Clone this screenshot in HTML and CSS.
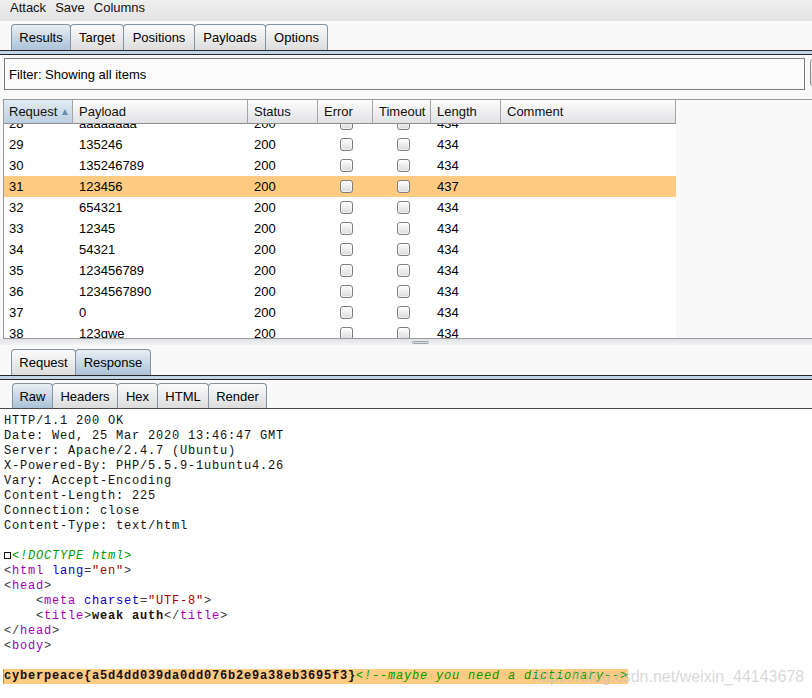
FILE: index.html
```html
<!DOCTYPE html>
<html lang="en">
<head>
<meta charset="UTF-8">
<title>Intruder attack</title>
<link rel="stylesheet" href="styles.css">
</head>
<body>
<div class="app">
  <div class="menubar"><span>Attack</span><span>Save</span><span>Columns</span></div>

  <div class="tabstrip top-tabs">
    <div class="tab sel tw-results">Results</div>
    <div class="tab tw-target">Target</div>
    <div class="tab tw-positions">Positions</div>
    <div class="tab tw-payloads">Payloads</div>
    <div class="tab tw-options">Options</div>
  </div>
  <div class="rule"></div>

  <div class="filter-row">
    <div class="filter">Filter: Showing all items</div>
    <div class="filter-btn"></div>
  </div>

  <div class="results">
    <div class="table">
      <div class="thead">
        <div class="th sorted">Request<span class="sort-arrow"></span></div>
        <div class="th">Payload</div>
        <div class="th">Status</div>
        <div class="th">Error</div>
        <div class="th">Timeout</div>
        <div class="th">Length</div>
        <div class="th">Comment</div>
      </div>
      <div class="tbody">
        <div class="rows">
          <div class="tr"><div class="td first">28</div><div class="td">aaaaaaaa</div><div class="td">200</div><div class="td cb"><span class="box"></span></div><div class="td cb"><span class="box"></span></div><div class="td">434</div><div class="td"></div></div>
          <div class="tr"><div class="td first">29</div><div class="td">135246</div><div class="td">200</div><div class="td cb"><span class="box"></span></div><div class="td cb"><span class="box"></span></div><div class="td">434</div><div class="td"></div></div>
          <div class="tr"><div class="td first">30</div><div class="td">135246789</div><div class="td">200</div><div class="td cb"><span class="box"></span></div><div class="td cb"><span class="box"></span></div><div class="td">434</div><div class="td"></div></div>
          <div class="tr hl"><div class="td first">31</div><div class="td">123456</div><div class="td">200</div><div class="td cb"><span class="box"></span></div><div class="td cb"><span class="box"></span></div><div class="td">437</div><div class="td"></div></div>
          <div class="tr"><div class="td first">32</div><div class="td">654321</div><div class="td">200</div><div class="td cb"><span class="box"></span></div><div class="td cb"><span class="box"></span></div><div class="td">434</div><div class="td"></div></div>
          <div class="tr"><div class="td first">33</div><div class="td">12345</div><div class="td">200</div><div class="td cb"><span class="box"></span></div><div class="td cb"><span class="box"></span></div><div class="td">434</div><div class="td"></div></div>
          <div class="tr"><div class="td first">34</div><div class="td">54321</div><div class="td">200</div><div class="td cb"><span class="box"></span></div><div class="td cb"><span class="box"></span></div><div class="td">434</div><div class="td"></div></div>
          <div class="tr"><div class="td first">35</div><div class="td">123456789</div><div class="td">200</div><div class="td cb"><span class="box"></span></div><div class="td cb"><span class="box"></span></div><div class="td">434</div><div class="td"></div></div>
          <div class="tr"><div class="td first">36</div><div class="td">1234567890</div><div class="td">200</div><div class="td cb"><span class="box"></span></div><div class="td cb"><span class="box"></span></div><div class="td">434</div><div class="td"></div></div>
          <div class="tr"><div class="td first">37</div><div class="td">0</div><div class="td">200</div><div class="td cb"><span class="box"></span></div><div class="td cb"><span class="box"></span></div><div class="td">434</div><div class="td"></div></div>
          <div class="tr"><div class="td first">38</div><div class="td">123qwe</div><div class="td">200</div><div class="td cb"><span class="box"></span></div><div class="td cb"><span class="box"></span></div><div class="td">434</div><div class="td"></div></div>
        </div>
      </div>
    </div>
    <div class="side"></div>
  </div>

  <div class="divider"><div class="handle"></div></div>

  <div class="tabstrip mid-tabs">
    <div class="tab tw-request">Request</div>
    <div class="tab sel tw-response">Response</div>
  </div>
  <div class="rule"></div>

  <div class="tabstrip sub-tabs">
    <div class="tab sel tw-raw">Raw</div>
    <div class="tab tw-headers">Headers</div>
    <div class="tab tw-hex">Hex</div>
    <div class="tab tw-html">HTML</div>
    <div class="tab tw-render">Render</div>
  </div>

  <div class="code">
<pre>HTTP/1.1 200 OK
Date: Wed, 25 Mar 2020 13:46:47 GMT
Server: Apache/2.4.7 (Ubuntu)
X-Powered-By: PHP/5.5.9-1ubuntu4.26
Vary: Accept-Encoding
Content-Length: 225
Connection: close
Content-Type: text/html

<span class="bom"></span><span class="cm">&lt;!DOCTYPE html&gt;</span>
<span class="p">&lt;</span><span class="tg">html</span> <span class="at">lang</span><span class="p">=</span><span class="av">"en"</span><span class="p">&gt;</span>
<span class="p">&lt;</span><span class="tg">head</span><span class="p">&gt;</span>
    <span class="p">&lt;</span><span class="tg">meta</span> <span class="at">charset</span><span class="p">=</span><span class="av">"UTF-8"</span><span class="p">&gt;</span>
    <span class="p">&lt;</span><span class="tg">title</span><span class="p">&gt;</span><span class="b">weak auth</span><span class="p">&lt;/</span><span class="tg">title</span><span class="p">&gt;</span>
<span class="p">&lt;/</span><span class="tg">head</span><span class="p">&gt;</span>
<span class="p">&lt;</span><span class="tg">body</span><span class="p">&gt;</span>

<span class="flag"><span class="b">cyberpeace{a5d4dd039da0dd076b2e9a38eb3695f3}</span><span class="cm">&lt;!--maybe you need a dictionary--&gt;</span></span></pre>
  </div>

  <div class="watermark">https://blog.csdn.net/weixin_44143678</div>
</div>
</body>
</html>
```

FILE: styles.css
```css
html, body {
  margin: 0;
  padding: 0;
}
body {
  background: #f8f8f8;
  font-family: "Liberation Sans", Arial, sans-serif;
  font-size: 13px;
  color: #000;
}
.app {
  width: 812px;
  height: 698px;
  overflow: hidden;
  position: relative;
  background: #f9f9f9;
}

/* menu */
.menubar {
  height: 21px;
  box-sizing: border-box;
  display: flex;
  align-items: flex-start;
  gap: 9px;
  padding-left: 10px;
  line-height: 15px;
  color: #111;
  background: linear-gradient(#efefef, #e3e3e3);
}

/* tabs */
.tabstrip {
  display: flex;
  align-items: flex-end;
  box-sizing: border-box;
  height: 29px;
  padding-top: 3px;
  padding-left: 11px;
}
.tab {
  height: 26px;
  box-sizing: border-box;
  border: 1px solid #8592a0;
  border-bottom: none;
  border-radius: 4px 4px 0 0;
  margin-right: -1px;
  display: flex;
  align-items: center;
  justify-content: center;
  background: linear-gradient(#fbfbfb, #dcdcdc);
  line-height: 1;
  flex-shrink: 0;
}
.tab.sel {
  background: linear-gradient(#e8eef4, #aac2d8);
  position: relative;
  z-index: 1;
}
.tw-results { width: 60px; }
.tw-target { width: 54px; }
.tw-positions { width: 72px; }
.tw-payloads { width: 72px; }
.tw-options { width: 63px; }
.tw-request { width: 65px; }
.tw-response { width: 76px; }
.tw-raw { width: 41px; }
.tw-headers { width: 66px; }
.tw-hex { width: 41px; }
.tw-html { width: 52px; }
.tw-render { width: 59px; }

.sub-tabs {
  padding-left: 12px;
  border-bottom: 1px solid #4a4a4a;
}
.sub-tabs .tab {
  height: 25px;
}
.mid-tabs {
  padding-top: 4px;
  height: 30px;
}

.rule {
  height: 5px;
  box-sizing: border-box;
  border-top: 1px solid #262626;
  border-bottom: 1px solid #262626;
  background: #c3d6e8;
}

/* filter */
.filter-row {
  display: flex;
  gap: 5px;
  margin-top: 3px;
  margin-left: 4px;
  height: 32px;
}
.filter {
  width: 801px;
  height: 32px;
  flex-shrink: 0;
  box-sizing: border-box;
  border: 1px solid #7a7a7a;
  background: #fbfbfb;
  padding-left: 4px;
  display: flex;
  align-items: center;
}
.filter-btn {
  width: 30px;
  height: 27px;
  margin-top: 1px;
  flex-shrink: 0;
  box-sizing: border-box;
  border: 1px solid #8a8a8a;
  border-radius: 3px;
  background: linear-gradient(#fafafa, #e0e0e0);
}

/* results table */
.results {
  margin-top: 9px;
  margin-left: 3px;
  height: 240px;
  box-sizing: border-box;
  border-top: 1px solid #9b9b9b;
  border-left: 1px solid #9b9b9b;
  border-bottom: 1px solid #9b9b9b;
  display: flex;
}
.table {
  width: 672px;
  flex-shrink: 0;
  display: flex;
  flex-direction: column;
}
.side {
  flex: 1;
  background: #f9f9f9;
}
.thead, .tr {
  display: grid;
  grid-template-columns: 69px 175px 70px 55px 58px 70px 175px;
}
.thead {
  height: 24px;
}
.th {
  box-sizing: border-box;
  border-right: 1px solid #a4a4a4;
  border-bottom: 1px solid #8e8e8e;
  background: linear-gradient(#fdfdfd, #e0e1e4);
  padding-left: 6px;
  display: flex;
  align-items: center;
  color: #111;
}
.th.sorted {
  padding-left: 5px;
  background: linear-gradient(#e2ebf3, #bbcfe1);
}
.sort-arrow {
  width: 0;
  height: 0;
  margin-left: 5px;
  border-left: 3.5px solid transparent;
  border-right: 3.5px solid transparent;
  border-bottom: 6px solid #6a8cb0;
}
.tbody {
  height: 214px;
  overflow: hidden;
  background: #fff;
}
.rows {
  margin-top: -11px;
}
.tr {
  height: 21px;
  line-height: 21px;
}
.tr.hl {
  background: #ffca82;
}
.td {
  padding-left: 6px;
  white-space: nowrap;
  overflow: hidden;
}
.td.first {
  padding-left: 5px;
}
.td.cb {
  padding-left: 0;
  display: flex;
  align-items: center;
  justify-content: center;
}
.box {
  width: 13px;
  height: 13px;
  box-sizing: border-box;
  border: 1px solid #7e7e7e;
  border-radius: 3px;
  background: linear-gradient(#ffffff, #dadada);
  box-shadow: inset 0 0 0 1px rgba(255,255,255,0.6);
  margin-left: 2px;
}

/* divider */
.divider {
  height: 6px;
  background: linear-gradient(#dfe2e6, #f3f3f3);
  padding-top: 2px;
  box-sizing: border-box;
}
.handle {
  margin-left: 412px;
  width: 17px;
  height: 3px;
  box-sizing: border-box;
  border: 1px solid #a0a6ae;
  border-radius: 2px;
  background: #d6dadf;
}

/* code area */
.code {
  background: #fff;
  height: 289px;
  padding: 5px 0 0 4px;
  box-sizing: border-box;
}
.code pre {
  margin: 0;
  font-family: "Liberation Mono", "Courier New", monospace;
  font-size: 12px;
  letter-spacing: 0.8px;
  line-height: 15px;
  color: #111;
}
.p { color: #3a3a3a; }
.tg { color: #a400b4; }
.at { color: #0000c8; }
.av { color: #a00000; }
.cm { color: #009a00; font-style: italic; }
.b { font-weight: bold; color: #111; }
.bom {
  display: inline-block;
  width: 7px;
  height: 7px;
  box-sizing: border-box;
  border: 1px solid #111;
  margin-right: 1px;
  vertical-align: 0;
}
.flag {
  display: inline-block;
  height: 15px;
  background: #ffca82;
  border-left: 1px solid #e08a20;
  margin-left: -1px;
}

.watermark {
  position: absolute;
  left: 532px;
  top: 668px;
  font-family: "Liberation Sans", Arial, sans-serif;
  font-size: 16px;
  line-height: 18px;
  color: rgba(190, 190, 190, 0.6);
  white-space: nowrap;
}
```
